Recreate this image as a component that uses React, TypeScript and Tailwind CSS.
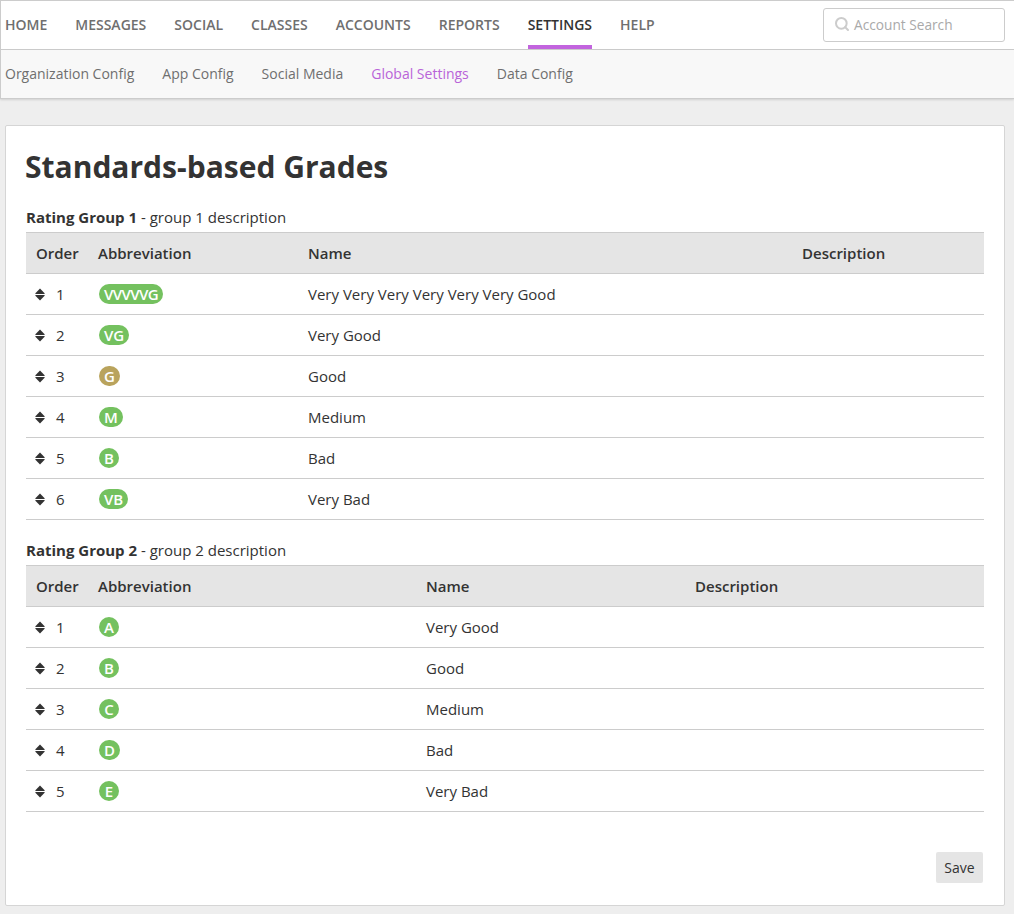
import { Search } from 'lucide-react'

const NAV = ['Home', 'Messages', 'Social', 'Classes', 'Accounts', 'Reports', 'Settings', 'Help']
const SUBNAV = ['Organization Config', 'App Config', 'Social Media', 'Global Settings', 'Data Config']

type Row = { abbr: string; name: string; color?: string }

const GROUP_ONE: Row[] = [
  { abbr: 'VVVVVG', name: 'Very Very Very Very Very Very Good' },
  { abbr: 'VG', name: 'Very Good' },
  { abbr: 'G', name: 'Good', color: 'bg-[#b9a35c]' },
  { abbr: 'M', name: 'Medium' },
  { abbr: 'B', name: 'Bad' },
  { abbr: 'VB', name: 'Very Bad' },
]

const GROUP_TWO: Row[] = [
  { abbr: 'A', name: 'Very Good' },
  { abbr: 'B', name: 'Good' },
  { abbr: 'C', name: 'Medium' },
  { abbr: 'D', name: 'Bad' },
  { abbr: 'E', name: 'Very Bad' },
]

function SortIcon() {
  return (
    <svg width="10" height="13" viewBox="0 0 10 13" className="fill-[#333]">
      <path d="M5 0.5 L9.6 5.2 Q10 6 9.2 6 L0.8 6 Q0 6 0.4 5.2 Z" />
      <path d="M5 12.5 L9.6 7.8 Q10 7 9.2 7 L0.8 7 Q0 7 0.4 7.8 Z" />
    </svg>
  )
}

function RatingTable({ title, desc, rows, cols }: {
  title: string
  desc: string
  rows: Row[]
  cols: string
}) {
  return (
    <div className="text-[15px]">
      <p className="leading-[30px] h-[30px] text-[#333]">
        <span className="font-bold">{title}</span> - {desc}
      </p>
      <div className={`grid ${cols}`}>
        <div className="col-span-4 grid grid-cols-subgrid h-[42px] items-center bg-[#e5e5e5] border-t border-b border-[#ccc] font-semibold text-[#333]">
          <div className="pl-[10px]">Order</div>
          <div>Abbreviation</div>
          <div>Name</div>
          <div>Description</div>
        </div>
        {rows.map((row, i) => (
          <div key={row.abbr} className="col-span-4 grid grid-cols-subgrid h-[41px] items-center border-b border-[#ccc] text-[#333]">
            <div className="pl-[9px] flex items-center gap-[11px]">
              <SortIcon />
              <span>{i + 1}</span>
            </div>
            <div className="flex pl-px">
              <span className={`h-5 min-w-5 px-[5px] rounded-full flex items-center justify-center text-white font-semibold leading-none ${row.abbr.length > 2 ? 'tracking-[-0.6px]' : ''} ${row.color ?? 'bg-[#74c15f]'}`}>
                {row.abbr}
              </span>
            </div>
            <div>{row.name}</div>
            <div />
          </div>
        ))}
      </div>
    </div>
  )
}

export default function App() {
  return (
    <div className="w-[1014px] h-[914px] overflow-hidden flex flex-col bg-[#eeeeee] text-[14px] font-['Open_Sans',sans-serif]">
      <header className="h-[50px] shrink-0 bg-white border-t border-l border-b border-[#ccc] flex items-stretch justify-between pl-1 pr-[9px]">
        <nav className="flex gap-7">
          {NAV.map(item => (
            <a
              key={item}
              className={`flex items-center uppercase font-semibold border-b-[4px] pt-[2px] ${
                item === 'Settings' ? 'text-[#333] border-[#c264de]' : 'text-[#6f6f6f] border-transparent'
              }`}
            >
              {item}
            </a>
          ))}
        </nav>
        <div className="self-center w-[182px] h-[34px] border border-[#ccc] rounded-[3px] flex items-center gap-[4px] pl-[10px] text-[#a9a9a9]">
          <Search size={16} strokeWidth={3} className="text-[#cccccc] -mt-[3px]" />
          <span className="text-[13.7px] leading-5">Account Search</span>
        </div>
      </header>

      <div className="h-[49px] shrink-0 bg-[#f8f8f8] border-l border-b border-[#ccc] shadow-[0_1px_2px_rgba(0,0,0,0.12)] flex items-center gap-7 pl-1 pb-[2px]">
        {SUBNAV.map(item => (
          <a key={item} className={item === 'Global Settings' ? 'text-[#b964d8]' : 'text-[#6f6f6f]'}>
            {item}
          </a>
        ))}
      </div>

      <main className="mt-[26px] ml-[5px] mr-[9px] h-[781px] shrink-0 bg-white border border-[#d5d5d5] rounded-[2px] pt-[20px] px-5 flex flex-col">
        <h1 className="text-[30px] leading-[42px] font-bold text-[#333] mb-[14px] -ml-px">Standards-based Grades</h1>
        <RatingTable
          title="Rating Group 1"
          desc="group 1 description"
          rows={GROUP_ONE}
          cols="grid-cols-[72px_210px_494px_1fr]"
        />
        <div className="h-[15px] shrink-0" />
        <RatingTable
          title="Rating Group 2"
          desc="group 2 description"
          rows={GROUP_TWO}
          cols="grid-cols-[72px_328px_269px_1fr]"
        />
        <div className="flex justify-end mt-10 pr-px">
          <button className="w-[47px] h-[31px] bg-[#e5e5e5] rounded-[2px] text-[#333]">Save</button>
        </div>
      </main>
    </div>
  )
}
